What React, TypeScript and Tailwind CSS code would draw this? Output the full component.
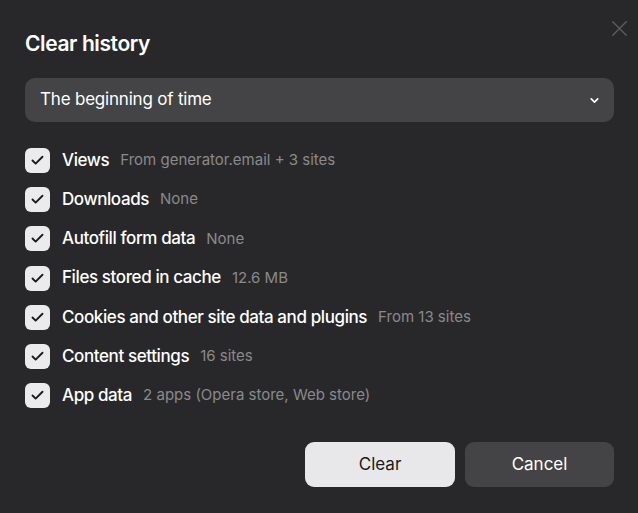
import { X, ChevronDown, Check } from 'lucide-react';

const items = [
  { label: 'Views', note: 'From generator.email + 3 sites' },
  { label: 'Downloads', note: 'None' },
  { label: 'Autofill form data', note: 'None' },
  { label: 'Files stored in cache', note: '12.6 MB' },
  { label: 'Cookies and other site data and plugins', note: 'From 13 sites' },
  { label: 'Content settings', note: '16 sites' },
  { label: 'App data', note: '2 apps (Opera store, Web store)' },
];

export default function App() {
  return (
    <div
      className="relative w-[638px] h-[513px] bg-[#28282a] text-white overflow-hidden"
      style={{ fontFamily: 'Inter, "Noto Sans", sans-serif' }}
    >
      <button className="absolute right-[5px] top-[15px] text-[#5e5e60]">
        <X size={27} strokeWidth={1.1} />
      </button>

      <div className="pl-[25px] pr-[24px] pt-[30px]">
        <h1 className="text-[21px] font-semibold leading-[28px] tracking-[-0.4px]">Clear history</h1>

        <div className="mt-[20px] h-[44px] rounded-[10px] bg-[#444446] flex items-center justify-between pl-[15px] pr-[13px]">
          <span className="text-[17px] tracking-[-0.2px]">The beginning of time</span>
          <ChevronDown size={13} strokeWidth={3} />
        </div>

        <div className="mt-[26px] flex flex-col gap-[14.2px]">
          {items.map((it) => (
            <label key={it.label} className="flex items-center h-[25px]">
              <span className="w-[25px] h-[25px] rounded-[6px] bg-[#ebebed] flex items-center justify-center text-[#1a1a1a] shrink-0">
                <Check size={15} strokeWidth={3} />
              </span>
              <span className="ml-[12px] text-[17px] font-medium tracking-[-0.4px]">{it.label}</span>
              <span className="ml-[11px] text-[15px] text-[#8a8a8c]">{it.note}</span>
            </label>
          ))}
        </div>

        <div className="mt-[34px] flex justify-end gap-[10px]">
          <button className="w-[150px] h-[45px] rounded-[9px] bg-[#e8e8ea] text-[#1a1a1a] text-[17px]">Clear</button>
          <button className="w-[149px] h-[45px] rounded-[9px] bg-[#444446] text-white text-[17px]">Cancel</button>
        </div>
      </div>
    </div>
  );
}
